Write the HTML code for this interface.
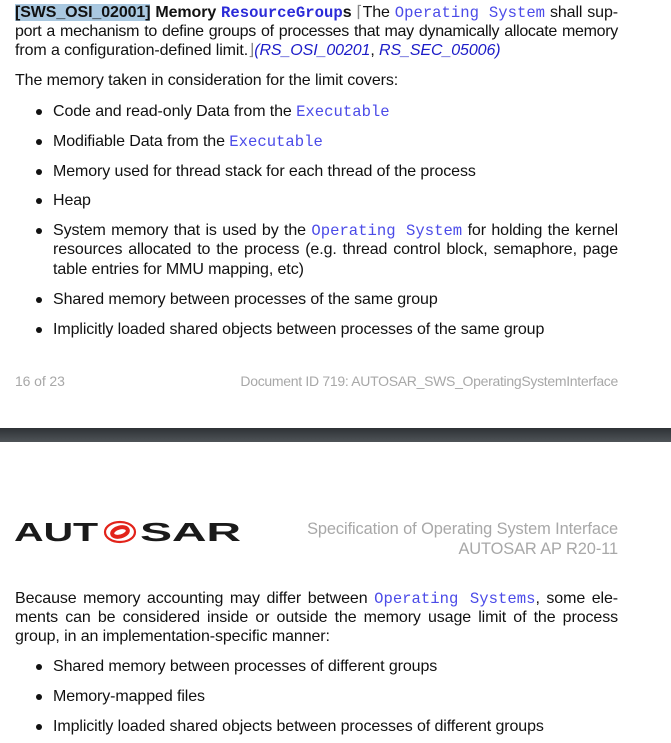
<!DOCTYPE html>
<html><head><meta charset="utf-8"><style>
body{margin:0;width:671px;height:743px;background:#fff;position:relative;overflow:hidden;font-family:"Liberation Sans",Arial,sans-serif;font-size:16px;color:#111;letter-spacing:-0.1px}
.l{position:absolute;left:15px;white-space:nowrap;line-height:19px}
.j{width:603px;text-align:justify;text-align-last:justify;white-space:normal}
.b{left:53px}
.b.j{width:565px}
.d{position:absolute;left:36px;width:6px;height:6px;border-radius:50%;background:#111}
.m{font-family:"Liberation Mono",monospace;color:#4b4be8;font-size:15.6px;letter-spacing:0}
.mb{font-family:"Liberation Mono",monospace;color:#2b2bd8;font-weight:bold;font-size:15.6px;letter-spacing:0}
.r{color:#1c1cc8;font-style:italic}
.g{color:#a8a8a8;font-size:14px;position:absolute;white-space:nowrap}
</style></head><body>
<div class="l j" style="top:3px"><b><span style="background:#a9c8e0">[SWS_OSI_02001]</span> Memory <span class="mb">ResourceGroup</span>s</b> <span style="color:#888">⌈</span>The <span class="m">Operating System</span> shall sup-</div>
<div class="l j" style="top:22px;letter-spacing:-0.3px;white-space:nowrap">port a mechanism to define groups of processes that may dynamically allocate memory</div>
<div class="l" style="top:41px">from a configuration-defined limit.<span style="color:#888">⌋</span><span class="r">(RS_OSI_00201</span>, <span class="r">RS_SEC_05006)</span></div>
<div class="l" style="top:71px">The memory taken in consideration for the limit covers:</div>

<div class="d" style="top:109px"></div><div class="l b" style="top:102px">Code and read-only Data from the <span class="m">Executable</span></div>
<div class="d" style="top:139px"></div><div class="l b" style="top:132px">Modifiable Data from the <span class="m">Executable</span></div>
<div class="d" style="top:169px"></div><div class="l b" style="top:162px">Memory used for thread stack for each thread of the process</div>
<div class="d" style="top:198px"></div><div class="l b" style="top:191px">Heap</div>
<div class="d" style="top:228px"></div><div class="l b j" style="top:221px">System memory that is used by the <span class="m">Operating System</span> for holding the kernel</div>
<div class="l b j" style="top:240px">resources allocated to the process (e.g. thread control block, semaphore, page</div>
<div class="l b" style="top:260px">table entries for MMU mapping, etc)</div>
<div class="d" style="top:297px"></div><div class="l b" style="top:290px">Shared memory between processes of the same group</div>
<div class="d" style="top:327px"></div><div class="l b" style="top:320px">Implicitly loaded shared objects between processes of the same group</div>

<div class="g" style="left:15px;top:373px">16 of 23</div>
<div class="g" style="right:53px;top:373px;letter-spacing:-0.3px">Document ID 719: AUTOSAR_SWS_OperatingSystemInterface</div>

<div style="position:absolute;left:0;top:428px;width:671px;height:14px;background:linear-gradient(#2e3236,#4f5458)"></div>

<svg style="position:absolute;left:14px;top:518px" width="230" height="28" viewBox="0 0 230 28">
<text x="0" y="23" font-family="Liberation Sans,sans-serif" font-weight="bold" font-size="26" fill="#1a1a1a" textLength="84" lengthAdjust="spacingAndGlyphs">AUT</text>
<ellipse cx="106" cy="14" rx="15" ry="10" fill="none" stroke="#e2231a" stroke-width="2.2"/>
<ellipse cx="106" cy="14" rx="8" ry="4.5" fill="none" stroke="#e2231a" stroke-width="4" transform="rotate(-15 106 14)"/>
<text x="126" y="23" font-family="Liberation Sans,sans-serif" font-weight="bold" font-size="26" fill="#1a1a1a" textLength="101" lengthAdjust="spacingAndGlyphs">SAR</text>
</svg>
<div class="g" style="right:53px;top:520px;font-size:16.4px">Specification of Operating System Interface</div>
<div class="g" style="right:53px;top:540px;font-size:16.4px">AUTOSAR AP R20-11</div>

<div class="l j" style="top:589px">Because memory accounting may differ between <span class="m">Operating Systems</span>, some ele-</div>
<div class="l j" style="top:608px">ments can be considered inside or outside the memory usage limit of the process</div>
<div class="l" style="top:627px">group, in an implementation-specific manner:</div>
<div class="d" style="top:664px"></div><div class="l b" style="top:657px">Shared memory between processes of different groups</div>
<div class="d" style="top:694px"></div><div class="l b" style="top:687px">Memory-mapped files</div>
<div class="d" style="top:724px"></div><div class="l b" style="top:717px">Implicitly loaded shared objects between processes of different groups</div>
</body></html>
